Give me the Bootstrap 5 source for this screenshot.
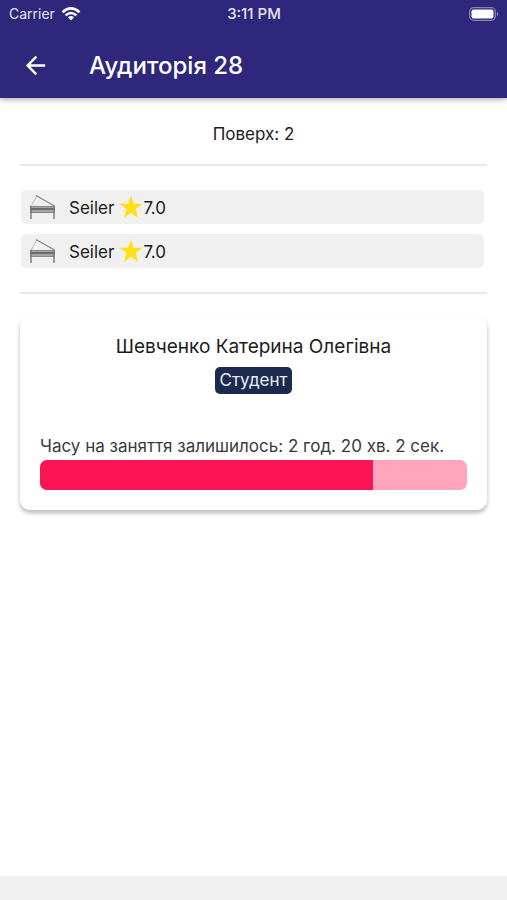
<!DOCTYPE html>
<html lang="uk">
<head>
<meta charset="utf-8">
<meta name="viewport" content="width=device-width, initial-scale=1">
<title>Аудиторія 28</title>
<link href="https://cdn.jsdelivr.net/npm/bootstrap@5.3.0/dist/css/bootstrap.min.css" rel="stylesheet">
<style>
body { font-family: Inter, "Liberation Sans", sans-serif; color: #1c1c1c; background: #fff; }
.app-header { background: #2e277b; box-shadow: 0 2px 5px rgba(0,0,0,.3); }
.status { height: 28px; font-size: 14px; line-height: 28px; padding: 0 8px 0 9px; color: #e4e2f4; }
.status-time { font-size: 15px; font-weight: 500; }
.status-left { gap: 6px; }
.toolbar { height: 70px; padding: 5px 21px 0; gap: 39px; }
.toolbar h1 { font-size: 24px; line-height: 32px; font-weight: 500; }
.screen { padding: 24px 20px 0; }
.floor { font-size: 17px; line-height: 24px; }
.rule { margin: 18px 0 0; border-top: 2px solid #e8e8ea; opacity: 1; }
.pianos { gap: 10px; padding: 24px 3px 0 1px; }
.piano { height: 34px; background: #f0f0f0; border-radius: 5px; padding-left: 8px; font-size: 17px; line-height: 24px; }
.piano span { padding-top: 2px; }
.piano-name { margin: 0 5px 0 13px; }
.visitor { margin-top: 22px; padding: 19px 20px 20px; border: 0; border-radius: 10px; box-shadow: 0 3px 4px rgba(0,0,0,.28); }
.visitor h2 { font-size: 19px; line-height: 24px; font-weight: 400; }
.role { background: #1d2a50; color: #e9edf5; font-size: 17px; line-height: 27px; border-radius: 5px; padding: 0 5px; }
.time-left { margin-top: 40px; font-size: 17px; line-height: 24px; color: #3a3a3c; }
.time-bar { height: 30px; margin-top: 2px; border-radius: 7px; background: #ffa4bd; }
.time-bar .progress-bar { background: #fc1554; }
.bottom-strip { height: 24px; background: #f0f0f0; }
</style>
<script src="https://cdn.jsdelivr.net/npm/bootstrap@5.3.0/dist/js/bootstrap.bundle.min.js"></script>
</head>
<body class="d-flex flex-column min-vh-100">
<svg width="0" height="0" class="position-absolute" aria-hidden="true">
  <symbol id="piano" viewBox="0 0 27 26">
    <path d="M1.800 12.500 8 2" stroke="#bbb" fill="none"/>
    <path d="M7 1.500 25.500 12" stroke="#888" stroke-width="1.400" fill="none"/>
    <path d="M1 12h25v7H1z" fill="#a6a6a6"/>
    <path d="M1 12.500h25M1 18.500h25" stroke="#888" fill="none"/>
    <path d="M1 15h25" stroke="#6c6c6c" stroke-width="2" fill="none"/>
    <path d="M2 12v13M25 12v13" stroke="#777" stroke-width="1.400"/>
  </symbol>
  <symbol id="star" viewBox="0 0 24 24">
    <path d="M12 .5 14.800 8.800H23.500L16.600 14 19.200 23 12 17.800 4.800 23 7.400 14 .5 8.800H9.200Z" fill="#ffe016"/>
  </symbol>
</svg>
<header class="app-header text-white">
  <div class="status row g-0">
    <div class="status-left col d-flex align-items-center">
      <span>Carrier</span>
      <svg width="20" height="16" viewBox="0 0 20 16" fill="none" stroke="#fff" stroke-width="2.600" aria-hidden="true">
        <path d="M1.500 6.200Q10-1.400 18.500 6.200M4.600 9.400Q10 4.600 15.400 9.400"/>
        <path d="M10 14.500 7 11.300Q10 8.600 13 11.300Z" fill="#fff" stroke="none"/>
      </svg>
    </div>
    <div class="col-auto status-time">3:11 PM</div>
    <div class="col d-flex align-items-center justify-content-end">
      <svg width="30" height="16" viewBox="0 0 30 16" aria-hidden="true">
        <rect x=".7" y="1.700" width="25.600" height="12.600" rx="4" fill="none" stroke="#8882b7" stroke-width="1.300"/>
        <rect x="2.500" y="3.500" width="22" height="9" rx="2" fill="#fff"/>
        <path d="M27.800 5.500q3 2.500 0 5z" fill="#8882b7"/>
      </svg>
    </div>
  </div>
  <div class="toolbar d-flex align-items-center">
    <button type="button" class="btn p-0 border-0 text-white d-flex" aria-label="Назад">
      <svg width="29" height="29" viewBox="0 0 24 24" fill="currentColor" aria-hidden="true"><path d="M20 11H7.830l5.590-5.590L12 4l-8 8 8 8 1.410-1.410L7.830 13H20z"/></svg>
    </button>
    <h1 class="m-0">Аудиторія 28</h1>
  </div>
</header>
<main class="screen flex-grow-1">
  <p class="floor text-center m-0">Поверх: 2</p>
  <hr class="rule">
  <ul class="pianos list-unstyled d-flex flex-column m-0">
    <li class="piano d-flex align-items-center">
      <svg width="27" height="26" aria-hidden="true"><use href="#piano"/></svg>
      <span class="piano-name">Seiler</span>
      <svg width="24" height="24" aria-hidden="true"><use href="#star"/></svg>
      <span>7.0</span>
    </li>
    <li class="piano d-flex align-items-center">
      <svg width="27" height="26" aria-hidden="true"><use href="#piano"/></svg>
      <span class="piano-name">Seiler</span>
      <svg width="24" height="24" aria-hidden="true"><use href="#star"/></svg>
      <span>7.0</span>
    </li>
  </ul>
  <hr class="rule mt-4">
  <section class="visitor card">
    <h2 class="text-center m-0">Шевченко Катерина Олегівна</h2>
    <div class="d-flex justify-content-center mt-2"><span class="role">Студент</span></div>
    <p class="time-left mb-0" id="time-left">Часу на заняття залишилось: 2 год. 20 хв. 2 сек.</p>
    <div class="time-bar progress" role="progressbar" aria-labelledby="time-left" aria-valuenow="78" aria-valuemin="0" aria-valuemax="100">
      <div class="progress-bar" style="width: 78%"></div>
    </div>
  </section>
</main>
<footer class="bottom-strip"></footer>
</body>
</html>
